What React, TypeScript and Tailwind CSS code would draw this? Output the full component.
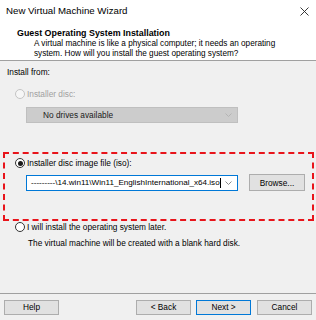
import React from 'react'

const font = { fontFamily: '"Liberation Sans", Arial, sans-serif' }

function Radio({ checked, disabled }: { checked?: boolean; disabled?: boolean }) {
  return (
    <span
      className={`flex items-center justify-center w-[10px] h-[10px] rounded-full border shrink-0 ${
        disabled ? 'border-[#c4c4c4] bg-[#f6f6f6]' : 'border-[#333333] bg-white'
      }`}
    >
      {checked && <span className="block w-[5px] h-[5px] rounded-full bg-[#1a1a1a]" />}
    </span>
  )
}

function Chevron({ color }: { color: string }) {
  return (
    <svg width="7" height="4" viewBox="0 0 7 4" className="shrink-0">
      <polyline points="0.5,0.5 3.5,3.5 6.5,0.5" fill="none" stroke={color} strokeWidth="1" />
    </svg>
  )
}

function Button({ label, primary }: { label: string; primary?: boolean }) {
  return (
    <div
      className={`flex items-center justify-center w-[55px] h-[15px] bg-[#e1e1e1] border text-[8.3px] text-black ${
        primary ? 'border-[#0078d7]' : 'border-[#adadad]'
      }`}
    >
      {label}
    </div>
  )
}

export default function App() {
  return (
    <div className="w-[316px] h-[320px] flex flex-col bg-[#f0f0f0] text-black overflow-hidden" style={font}>
      <div className="h-[61px] bg-white border-b border-[#a0a0a0] flex flex-col">
        <div className="h-[22px] flex items-center justify-between pl-[6px] pr-[6px]">
          <span className="text-[9.7px]">New Virtual Machine Wizard</span>
          <svg width="9" height="9" viewBox="0 0 9 9" className="mr-[1px]">
            <path d="M0.5 0.5 L8.5 8.5 M8.5 0.5 L0.5 8.5" stroke="#222" strokeWidth="0.9" />
          </svg>
        </div>
        <div className="pl-[17px] mt-[5px] text-[8.9px] font-bold leading-[12px]">Guest Operating System Installation</div>
        <div className="pl-[34px] text-[8.2px] leading-[10px]">
          <div>A virtual machine is like a physical computer; it needs an operating</div>
          <div>system. How will you install the guest operating system?</div>
        </div>
      </div>

      <div className="flex flex-col text-[8.3px] leading-[12px]">
        <div className="pl-[7px] mt-[5px]">Install from:</div>

        <div className="flex items-center pl-[15px] mt-[10px] h-[12px] gap-[2px] text-[#a0a0a0]">
          <Radio disabled />
          <span>Installer disc:</span>
        </div>

        <div className="ml-[26px] mt-[7px] w-[212px] h-[16px] flex items-center justify-between pl-[16px] pr-[5px] bg-[#cccccc] border border-[#bfbfbf]">
          <span className="text-[#1a1a1a]">No drives available</span>
          <Chevron color="#b4b4b4" />
        </div>

        <div className="ml-[3px] mt-[29px] w-[311px] h-[69px] border-2 border-dashed border-[#e8141b] flex flex-col">
          <div className="flex items-center pl-[10px] mt-[3px] h-[12px] gap-[2px]">
            <Radio checked />
            <span>Installer disc image file (iso):</span>
          </div>
          <div className="flex items-center mt-[5px]">
            <div className="ml-[21px] w-[212px] h-[16px] flex items-center justify-between pl-[4px] pr-[5px] bg-white border border-[#0078d7] overflow-hidden">
              <span className="flex items-center whitespace-nowrap text-[8.1px]">
                <span>---------\14.win11\Win11_EnglishInternational_x64.iso</span>
                <span className="inline-block w-[1px] h-[10px] bg-black" />
              </span>
              <Chevron color="#8a8a8a" />
            </div>
            <div className="ml-[11px] w-[56px] h-[17px] flex items-center justify-center bg-[#e1e1e1] border border-[#adadad]">
              Browse...
            </div>
          </div>
        </div>

        <div className="flex items-center pl-[15px] h-[12px] gap-[2px]">
          <Radio />
          <span>I will install the operating system later.</span>
        </div>

        <div className="pl-[28px] mt-[4px]">The virtual machine will be created with a blank hard disk.</div>
      </div>

      <div className="mt-auto h-[27px] border-t border-[#a0a0a0] flex items-start pt-[6px] px-[4px]">
        <Button label="Help" />
        <div className="ml-auto flex gap-[6px]">
          <div className="flex gap-[5px]">
            <Button label="< Back" />
            <Button label="Next >" primary />
          </div>
          <Button label="Cancel" />
        </div>
      </div>
    </div>
  )
}
